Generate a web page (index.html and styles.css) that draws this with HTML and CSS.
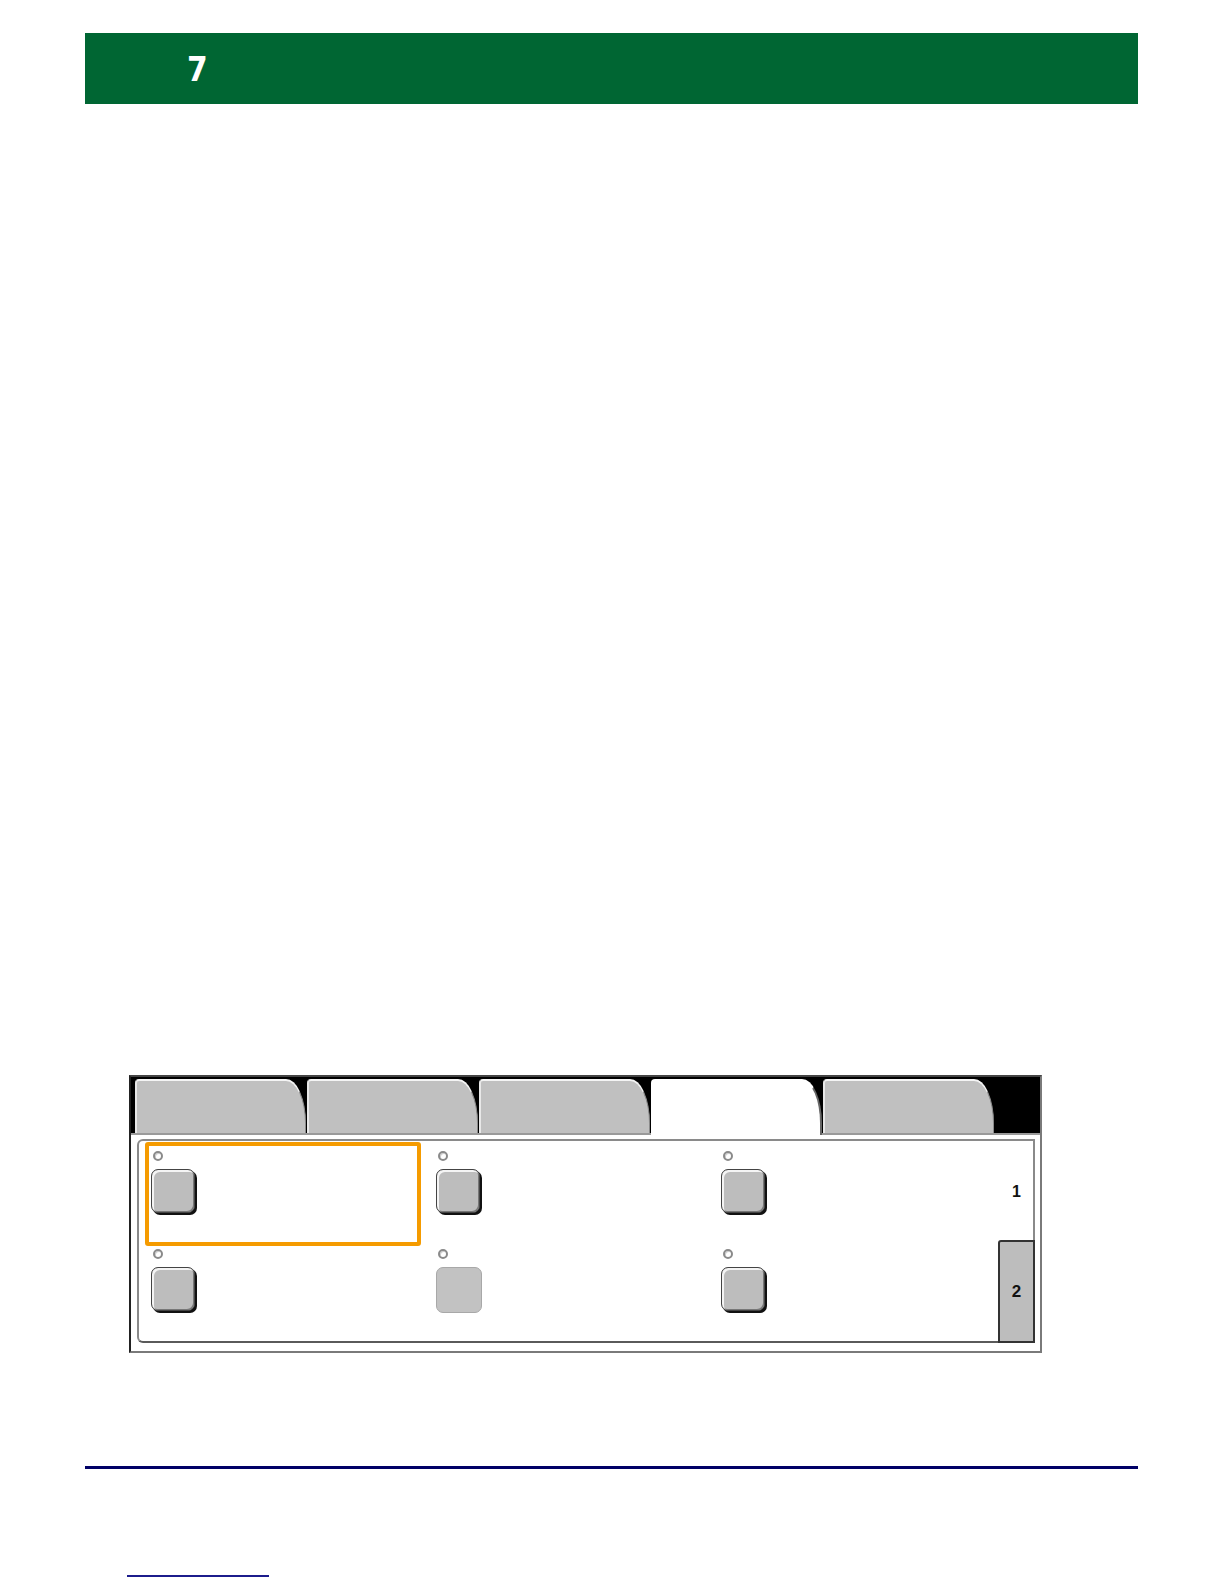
FILE: index.html
```html
<!DOCTYPE html>
<html>
<head>
<meta charset="utf-8">
<link rel="stylesheet" href="styles.css">
</head>
<body>
<div class="page">
  <header class="chapter-bar"><span class="chapter-num">7</span></header>

  <div class="screen">
    <div class="tabs">
      <div class="tab"></div>
      <div class="tab"></div>
      <div class="tab"></div>
      <div class="tab active"></div>
      <div class="tab"></div>
    </div>
    <div class="tab-body">
      <div class="grid">
        <div class="cell selected"><span class="radio"></span><span class="btn"></span><span class="highlight"></span></div>
        <div class="cell"><span class="radio"></span><span class="btn"></span></div>
        <div class="cell"><span class="radio"></span><span class="btn"></span></div>
        <div class="page-num">1</div>
        <div class="cell"><span class="radio"></span><span class="btn"></span></div>
        <div class="cell"><span class="radio"></span><span class="btn disabled"></span></div>
        <div class="cell"><span class="radio"></span><span class="btn"></span></div>
        <div class="page-num"></div>
      </div>
      <div class="page-tab">2</div>
    </div>
  </div>

  <div class="rule"></div>
  <div class="footer-link"></div>
</div>
</body>
</html>
```

FILE: styles.css
```css
html, body {
  margin: 0;
  padding: 0;
  background: #ffffff;
}
body {
  width: 1224px;
  height: 1584px;
  overflow: hidden;
  font-family: "Liberation Sans", Arial, sans-serif;
}
.page {
  padding-top: 33px;
}
.chapter-bar {
  margin-left: 85px;
  width: 1053px;
  height: 71px;
  background: #006633;
  display: flex;
  align-items: center;
  box-sizing: border-box;
  padding-left: 102px;
}
.chapter-num {
  color: #ffffff;
  font-family: "DejaVu Sans Condensed", "Liberation Sans", Arial, sans-serif;
  font-stretch: condensed;
  font-weight: bold;
  font-size: 33px;
  line-height: 1;
  margin-top: 2px;
}

/* touch screen illustration */
.screen {
  margin-top: 971px;
  margin-left: 129px;
  width: 913px;
  height: 278px;
  box-sizing: border-box;
  border: 2px solid #7a7a7a;
  border-left-color: #222;
  border-top-color: #444;
  background: #ffffff;
  display: flex;
  flex-direction: column;
}
.tabs {
  height: 58px;
  flex: none;
  background: #000000;
  display: flex;
  padding: 2px 0 0 4px;
  box-sizing: border-box;
  border-bottom: 2px solid #9a9a9a;
}
.tab {
  width: 171px;
  height: 54px;
  background: #c0c0c0;
  border-top: 2px solid #f4f4f4;
  border-left: 2px solid #e8e8e8;
  border-right: 1px solid #8a8a8a;
  box-sizing: border-box;
  border-top-left-radius: 4px;
  border-top-right-radius: 20px 44px;
}
.tab + .tab {
  margin-left: 1px;
}
.tab.active {
  background: #ffffff;
  border-top-color: #ffffff;
  border-left-color: #ffffff;
  border-right: 2px solid #666;
  margin-bottom: -2px;
  height: 56px;
}
.tab-body {
  position: relative;
  margin: 4px 5px 8px 6px;
  height: 204px;
  flex: none;
  border: 2px solid #5a5a5a;
  border-top-color: #8a8a8a;
  border-left-color: #8a8a8a;
  border-radius: 6px 0 0 6px;
  border-right: 2px solid #8a8a8a;
  box-sizing: border-box;
}
.grid {
  display: grid;
  grid-template-columns: 285px 285px 285px 33px;
  grid-template-rows: 98px 98px;
  padding: 1px 0 0 6px;
}
.cell {
  position: relative;
}
.radio {
  position: absolute;
  left: 8px;
  top: 9px;
  width: 6px;
  height: 6px;
  border: 2px solid #8a8a8a;
  border-radius: 50%;
  background: #ffffff;
  box-shadow: inset 1px 1px 0 #cfcfcf;
}
.btn {
  position: absolute;
  left: 6px;
  top: 27px;
  width: 44px;
  height: 44px;
  box-sizing: border-box;
  background: #bdbdbd;
  border: 1px solid #444;
  border-radius: 7px;
  box-shadow: inset 2px 2px 0 #f4f4f4, inset -1px -1px 0 #777, 2px 2px 0 #111;
}
.btn.disabled {
  width: 46px;
  height: 46px;
  background: #c2c2c2;
  border: 1px solid #a8a8a8;
  box-shadow: none;
}
.highlight {
  position: absolute;
  left: 0;
  top: 0;
  width: 276px;
  height: 104px;
  box-sizing: border-box;
  border: 4px solid #f59b00;
  border-radius: 3px;
}
.page-num {
  display: flex;
  align-items: center;
  justify-content: center;
  font-weight: bold;
  font-size: 16px;
  color: #111;
  padding-top: 2px;
}
.page-tab {
  position: absolute;
  right: -2px;
  bottom: -2px;
  width: 37px;
  height: 103px;
  box-sizing: border-box;
  background: #bdbdbd;
  border: 2px solid #333;
  border-radius: 3px 0 0 0;
  display: flex;
  align-items: center;
  justify-content: center;
  font-weight: bold;
  font-size: 17px;
  color: #111;
}

.rule {
  margin-top: 113px;
  margin-left: 85px;
  width: 1053px;
  height: 3px;
  background: #000066;
}
.footer-link {
  margin-top: 106px;
  margin-left: 127px;
  width: 142px;
  height: 2px;
  background: #1c1c8c;
}
```
